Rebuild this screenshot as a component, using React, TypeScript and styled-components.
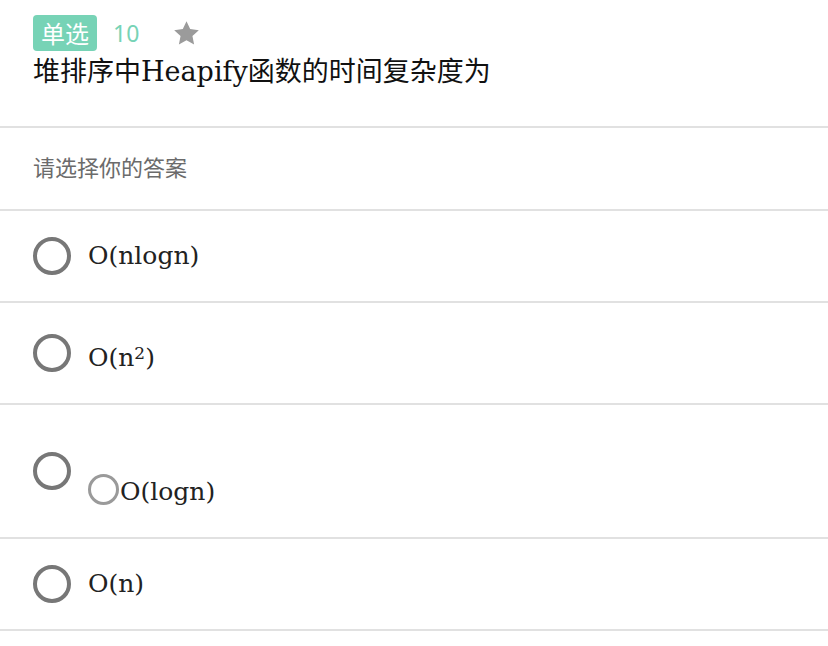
import React from "react";
import styled, { createGlobalStyle } from "styled-components";

const GlobalStyle = createGlobalStyle`
  html, body {
    margin: 0;
    padding: 0;
    background: #ffffff;
  }
  body {
    font-family: "Noto Sans", "Noto Sans CJK SC", sans-serif;
  }
`;

const Page = styled.div`
  width: 828px;
  background: #fff;
`;

const Header = styled.header`
  padding: 15px 33px 36px;
  border-bottom: 2px solid #e1e1e1;
`;

const MetaRow = styled.div`
  display: flex;
  align-items: center;
  height: 36px;
`;

const TypeTag = styled.span`
  display: inline-flex;
  align-items: center;
  height: 36px;
  padding: 0 8px;
  border-radius: 4px;
  background: #77d3b6;
  color: #fff;
  font-family: "Noto Sans CJK SC", sans-serif;
  font-size: 24px;
  line-height: 36px;
`;

const Score = styled.span`
  margin-left: 16px;
  color: #77d3b6;
  font-family: "Noto Sans", "Open Sans", sans-serif;
  font-size: 23px;
  line-height: 36px;
`;

const StarButton = styled.span`
  display: inline-flex;
  margin-left: 33px;
  width: 29px;
  height: 29px;
  color: #9b9b9b;
`;

const Title = styled.h1`
  margin: 3px 0 0;
  font-family: "DejaVu Serif", "Noto Sans CJK SC", serif;
  font-weight: 400;
  font-size: 27px;
  line-height: 36px;
  color: #111;
`;

const Prompt = styled.div`
  padding: 23px 33px 28px;
  border-bottom: 2px solid #e1e1e1;
  font-family: "Noto Sans CJK SC", sans-serif;
  font-size: 22px;
  line-height: 30px;
  color: #6b6b6b;
`;

const OptionList = styled.ul`
  list-style: none;
  margin: 0;
  padding: 0;
`;

const OptionRow = styled.li`
  display: flex;
  align-items: center;
  gap: 17px;
  padding: 26px 33px;
  border-bottom: 2px solid #e1e1e1;
`;

const Radio = styled.span`
  flex: none;
  box-sizing: border-box;
  width: 38px;
  height: 38px;
  border: 4px solid #777;
  border-radius: 50%;
`;

const OptionText = styled.span`
  font-family: "DejaVu Serif", "Noto Sans CJK SC", serif;
  font-size: 25px;
  line-height: 38px;
  color: #222;

  sup {
    font-size: 17px;
    line-height: 48px;
    vertical-align: 7px;
  }
`;

const InlineRadio = styled.span`
  display: inline-block;
  box-sizing: border-box;
  width: 31px;
  height: 31px;
  margin-top: 43px;
  margin-right: 1px;
  border: 3px solid #9a9a9a;
  border-radius: 50%;
  vertical-align: -5px;
`;

const Star = () => (
  <svg width="29" height="29" viewBox="0 0 24 24" fill="currentColor">
    <path d="M12 1.8l3.05 6.55 7.15.86-5.28 4.9 1.38 7.08L12 17.65 5.7 21.19l1.38-7.08L1.8 9.21l7.15-.86z" />
  </svg>
);

export default function App() {
  return (
    <Page>
      <GlobalStyle />
      <Header>
        <MetaRow>
          <TypeTag>单选</TypeTag>
          <Score>10</Score>
          <StarButton>
            <Star />
          </StarButton>
        </MetaRow>
        <Title>堆排序中Heapify函数的时间复杂度为</Title>
      </Header>
      <Prompt>请选择你的答案</Prompt>
      <OptionList>
        <OptionRow>
          <Radio />
          <OptionText>O(nlogn)</OptionText>
        </OptionRow>
        <OptionRow>
          <Radio />
          <OptionText>
            O(n<sup>2</sup>)
          </OptionText>
        </OptionRow>
        <OptionRow>
          <Radio />
          <OptionText>
            <InlineRadio />
            O(logn)
          </OptionText>
        </OptionRow>
        <OptionRow>
          <Radio />
          <OptionText>O(n)</OptionText>
        </OptionRow>
      </OptionList>
    </Page>
  );
}
